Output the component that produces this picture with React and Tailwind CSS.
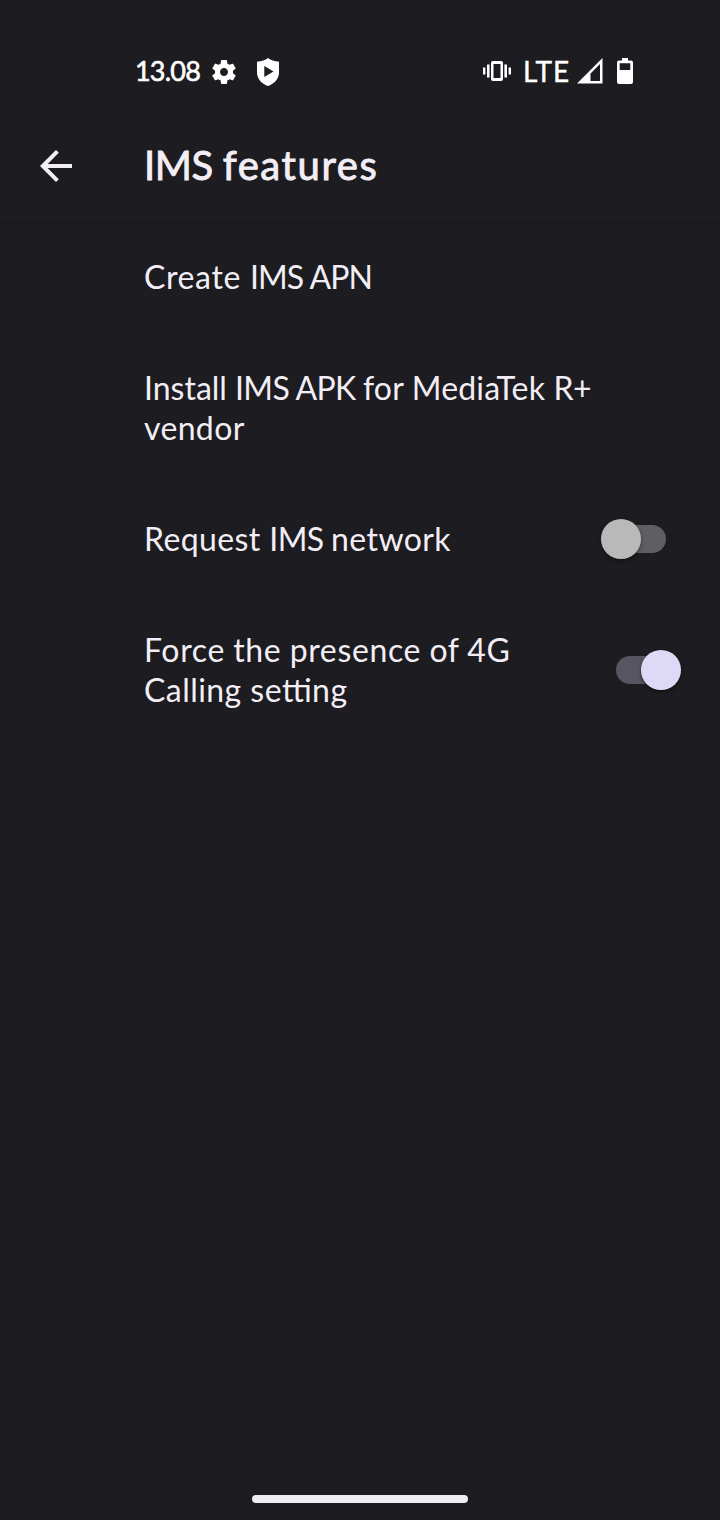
function GearIcon() {
  return (
    <svg className="block" width="30" height="30" viewBox="0 0 24 24" fill="#fff">
      <path d="M19.14 12.94c.04-.3.06-.61.06-.94 0-.32-.02-.64-.07-.94l2.03-1.58c.18-.14.23-.41.12-.61l-1.92-3.32c-.12-.22-.37-.29-.59-.22l-2.39.96c-.5-.38-1.03-.7-1.62-.94l-.36-2.54c-.04-.24-.24-.41-.48-.41h-3.84c-.24 0-.43.17-.47.41l-.36 2.54c-.59.24-1.13.57-1.62.94l-2.39-.96c-.22-.08-.47 0-.59.22L2.74 8.87c-.12.21-.08.47.12.61l2.03 1.58c-.05.3-.09.63-.09.94s.02.64.07.94l-2.03 1.58c-.18.14-.23.41-.12.61l1.92 3.32c.12.22.37.29.59.22l2.39-.96c.5.38 1.03.7 1.62.94l.36 2.54c.05.24.24.41.48.41h3.84c.24 0 .44-.17.47-.41l.36-2.54c.59-.24 1.13-.56 1.62-.94l2.39.96c.22.08.47 0 .59-.22l1.92-3.32c.12-.22.07-.47-.12-.61l-2.01-1.58zM12 15.2c-1.770 0-3.200-1.430-3.200-3.200s1.430-3.200 3.200-3.200 3.200 1.430 3.200 3.200-1.430 3.200-3.200 3.200z" />
    </svg>
  );
}

function ShieldIcon() {
  return (
    <svg className="block" width="22" height="28" viewBox="0 0 22 28" fill="#fff" fillRule="evenodd">
      <path d="M11 0 Q15 3.200 22 3.800 V14.500 C22 21.500 16.500 26.200 11 28 C5.500 26.200 0 21.500 0 14.500 V3.800 Q7 3.200 11 0 Z M7.300 8 V19 L16.500 13.500 Z" />
    </svg>
  );
}

function VibrateIcon() {
  return (
    <svg className="block" width="28" height="20" viewBox="0 0 28 20" fill="#fff" fillRule="evenodd">
      <path d="M10 0 H18 Q20 0 20 2 V18 Q20 20 18 20 H10 Q8 20 8 18 V2 Q8 0 10 0 Z M10.500 3 V17 H17.500 V3 Z" />
      <path d="M0 6.500h2.400v7H0zM4 3.500h2.600v13H4zM21.400 3.500H24v13h-2.600zM25.600 6.500H28v7h-2.400z" />
    </svg>
  );
}

function SignalIcon() {
  return (
    <svg className="block" width="26" height="26" viewBox="0 0 26 26" fill="#fff" fillRule="evenodd">
      <path d="M25.500 0 V25.500 H0 Z M23 6 L13.500 15.500 V23 H23 Z" />
    </svg>
  );
}

function BatteryIcon() {
  return (
    <svg className="block" width="16" height="26" viewBox="0 0 16 26" fill="#fff" fillRule="evenodd">
      <path d="M5 0 H11 V2.500 H14 Q16 2.500 16 4.500 V24 Q16 26 14 26 H2 Q0 26 0 24 V4.500 Q0 2.500 2 2.500 H5 Z M2.700 5.300 V12 H13.300 V5.300 Z" />
    </svg>
  );
}

function Switch({ on }) {
  return (
    <div
      role="switch"
      aria-checked={on}
      className={
        on
          ? "flex h-7 w-[50px] shrink-0 items-center rounded-full bg-[#57555f] pl-[25px]"
          : "flex h-7 w-[50px] shrink-0 items-center rounded-full bg-[#5f5e62]"
      }
    >
      <span
        className={
          on
            ? "size-10 shrink-0 rounded-full bg-[#dfd9f8] shadow-[0_2px_4px_rgba(0,0,0,0.4)]"
            : "-ml-[15px] size-10 shrink-0 rounded-full bg-[#b9b9b9] shadow-[0_2px_4px_rgba(0,0,0,0.4)]"
        }
      />
    </div>
  );
}

function Row({ children, control }) {
  return (
    <li className="flex items-center justify-between py-[35.5px] pl-36 pr-[54px]">
      <div className="flex flex-col items-start whitespace-nowrap text-[32px] leading-10 [font-feature-settings:'liga']">
        {children}
      </div>
      {control}
    </li>
  );
}

export default function App() {
  return (
    <div className="flex h-[1520px] w-[720px] flex-col overflow-hidden bg-[#1d1c20] font-['Lato',sans-serif] text-[#f3eef6]">
      <div className="flex h-[110px] shrink-0 items-center justify-between pl-[135px] pr-[87px] pt-[33px] text-white">
        <div className="flex items-center">
          <span className="w-[74px] text-[27px] tracking-[-0.8px] [-webkit-text-stroke:0.6px_white]">13.08</span>
          <GearIcon />
          <span className="ml-[18px]"><ShieldIcon /></span>
        </div>
        <div className="flex items-center pb-[2px]">
          <VibrateIcon />
          <span className="ml-3 w-[54px] text-[28px] tracking-[0.8px] [-webkit-text-stroke:0.4px_white]">LTE</span>
          <SignalIcon />
          <span className="ml-[14px]"><BatteryIcon /></span>
        </div>
      </div>
      <header className="flex h-28 shrink-0 items-center pl-10 shadow-[0_1px_4px_rgba(0,0,0,0.15)]">
        <svg className="block" width="32" height="32" viewBox="0 0 32 32" fill="none" stroke="#f3eef6" strokeWidth="4">
          <path d="M32 16H4M17.400 1.400L2.800 16L17.400 30.600" />
        </svg>
        <h1 className="ml-[72px] pb-[3px] text-[40px] tracking-[1.6px] [-webkit-text-stroke:0.9px_#f3eef6]">
          <span className="tracking-[-0.4px]">IMS </span>features
        </h1>
      </header>
      <ul className="-mt-px">
        <Row>
          <span className="tracking-[-0.9px]">
            <span className="tracking-[0.65px]">Create </span>IMS APN
          </span>
        </Row>
        <Row>
          <span className="tracking-[-0.7px]">
            <span className="tracking-[0px]">Install </span>IMS APK <span className="tracking-[0.2px]">for MediaTek </span>R+
          </span>
          <span className="tracking-[0.35px]">vendor</span>
        </Row>
        <Row control={<Switch on={false} />}>
          <span className="tracking-[0.4px]">
            Request <span className="tracking-[-0.6px]">IMS </span>network
          </span>
        </Row>
        <Row control={<Switch on={true} />}>
          <span className="tracking-[0.65px] [word-spacing:-0.6px]">Force the presence of 4G</span>
          <span className="tracking-[0.45px]">Calling setting</span>
        </Row>
      </ul>
      <div className="mb-[17px] mt-auto h-2 w-[216px] self-center rounded-full bg-[#efedf0]" />
    </div>
  );
}
